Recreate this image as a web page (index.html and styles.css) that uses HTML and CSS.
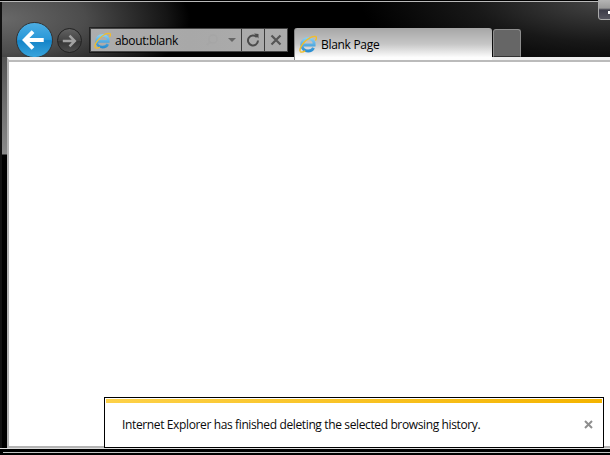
FILE: index.html
```html
<!DOCTYPE html>
<html lang="en">
<head>
<meta charset="utf-8">
<title>Blank Page</title>
<link rel="stylesheet" href="styles.css">
</head>
<body>
<svg class="defs" width="0" height="0" aria-hidden="true">
  <defs>
    <linearGradient id="ieblue" x1="0" y1="0" x2="0" y2="1">
      <stop offset="0" stop-color="#86cdf2"/>
      <stop offset="1" stop-color="#2a8ed2"/>
    </linearGradient>
    <symbol id="ie" viewBox="0 0 18 18">
      <path d="M3.500 10h11.700c.3-3.800-2.400-6.500-6-6.500-3.700 0-6.500 2.800-6.500 6.300s2.800 6.200 6.400 6.200c2.600 0 4.500-1.200 5.500-3.200" fill="none" stroke="url(#ieblue)" stroke-width="2.800"/>
      <path d="M1.300 16.500C-.2 13.800 4.500 5.500 12.300 2.100c2.700-1.100 4.900-.9 5.200.4.200.9-.4 2-1.200 3" fill="none" stroke="#f2bd2a" stroke-width="1.400"/>
      <path d="M1.300 16.500c.8 1 3 .5 5-.6" fill="none" stroke="#f2bd2a" stroke-width="1.400"/>
    </symbol>
  </defs>
</svg>
<div class="window">
  <div class="caption-btn"><span class="caption-glyph"></span></div>
  <header class="chrome">
    <div class="nav-back">
      <svg width="36" height="36" viewBox="0 0 36 36"><path d="M27.500 18H10M16.500 9.500 8 18l8.500 8.500" fill="none" stroke="#fff" stroke-width="4"/></svg>
    </div>
    <div class="nav-forward">
      <svg width="24" height="24" viewBox="0 0 24 24"><path d="M5 12h13M12 6.500l5.500 5.500-5.500 5.500" fill="none" stroke="#a2a2a2" stroke-width="2.600"/></svg>
    </div>
    <div class="address">
      <div class="address-field">
        <svg class="ie-small" width="17" height="17"><use href="#ie"/></svg>
        <span class="address-text">about:blank</span>
        <svg class="search" width="14" height="14" viewBox="0 0 14 14"><circle cx="8" cy="6" r="4" fill="none" stroke="#a4a4a4" stroke-width="1.500"/><path d="M5 9 2 12" stroke="#a4a4a4" stroke-width="2"/></svg>
        <span class="caret"></span>
      </div>
      <div class="address-btn">
        <svg width="14" height="14" viewBox="0 0 14 14"><path d="M10.800 4.200A5 5 0 1 0 12 7.500" fill="none" stroke="#4c4c4c" stroke-width="2"/><path d="M8 .5 12.500 1v4.500z" fill="#4c4c4c"/></svg>
      </div>
      <div class="address-btn">
        <svg width="14" height="14" viewBox="0 0 14 14"><path d="M2.500 2.500l9 9M11.500 2.500l-9 9" stroke="#555" stroke-width="2.200"/></svg>
      </div>
    </div>
    <div class="tab">
      <svg class="ie-small" width="18" height="18"><use href="#ie"/></svg>
      <span class="tab-title">Blank Page</span>
    </div>
    <div class="new-tab"></div>
  </header>
  <div class="frame-row">
    <div class="frame-side"></div>
    <main class="page"><div class="page-rule"></div></main>
  </div>
  <div class="frame-bottom"></div>
  <aside class="notice">
    <div class="notice-bar"></div>
    <div class="notice-body">
      <span class="notice-text">Internet Explorer has finished deleting the selected browsing history.</span>
      <svg width="9" height="9" viewBox="0 0 9 9"><path d="M1 1l7 7M8 1 1 8" stroke="#8e8e8e" stroke-width="2"/></svg>
    </div>
  </aside>
</div>
</body>
</html>
```

FILE: styles.css
```css
* { box-sizing: border-box; }
html, body { margin: 0; padding: 0; }
body { width: 610px; height: 455px; overflow: hidden; background: #000; font-family: "Open Sans", "Noto Sans", sans-serif; }
.defs { position: absolute; }
.window {
  position: relative;
  width: 610px;
  height: 455px;
  display: flex;
  flex-direction: column;
  overflow: hidden;
  background: #000;
}
.caption-btn {
  position: absolute;
  z-index: 2;
  left: 598px;
  top: -2px;
  width: 20px;
  height: 22px;
  border: 1px solid #aaa;
  border-radius: 0 0 3px 3px;
  background: linear-gradient(#b8b8b8, #9a9a9a 45%, #3c3c48 55%, #55555f);
}
.caption-glyph { position: absolute; left: 9px; top: 12px; width: 4px; height: 3px; background: #fff; }
.chrome {
  height: 57px;
  flex: none;
  display: flex;
  align-items: flex-start;
  padding: 27px 0 0 16px;
  border-top: 1px solid #000;
  background:
    radial-gradient(ellipse 250px 75px at 100% 0, #474747, rgba(40,40,40,.6) 55%, rgba(0,0,0,0) 100%),
    radial-gradient(ellipse 190px 75px at 0 18px, #696969, #4c4c4c 45%, #151515 88%, #000 100%),
    #000;
  box-shadow: inset 0 1px 0 #b9b9b9, inset 2px 0 0 #111;
}
.nav-back {
  width: 37px;
  height: 36px;
  margin-top: -6px;
  border-radius: 18.5px 18.5px 18px 18px;
  background: linear-gradient(#4cade2, #2a98d8 48%, #1484c8 52%, #38a4dc);
  border: 1px solid #333;
  display: flex;
  align-items: center;
  justify-content: center;
  flex: none;
}
.nav-forward {
  width: 25px;
  height: 25px;
  margin: 0 0 0 4px;
  border-radius: 50%;
  background: linear-gradient(#626262, #444 50%, #363636 52%, #4e4e4e);
  border: 1px solid #222;
  display: flex;
  align-items: center;
  justify-content: center;
  flex: none;
}
.address {
  margin-left: 8px;
  width: 198px;
  height: 24px;
  display: flex;
  flex: none;
  border: 1px solid #444;
  background: linear-gradient(90deg, #adadad, #a8a8a8 50%, #acacac);
  box-shadow: 0 0 0 1px rgba(0,0,0,.5);
}
.address-field {
  flex: 1;
  display: flex;
  align-items: center;
  padding-left: 3px;
  font-size: 12px;
  letter-spacing: -0.35px;
  color: #000;
  border-right: 1px solid #3c3c3c;
}
.ie-small { flex: none; }
.address-text { margin-left: 4px; flex: 1; }
.search { margin-right: 9px; opacity: .5; }
.caret { width: 0; height: 0; border: 4px solid transparent; border-top-color: #666; border-bottom: 0; margin-right: 5px; }
.address-btn {
  width: 23px;
  display: flex;
  align-items: center;
  justify-content: center;
  border-right: 1px solid #3c3c3c;
}
.address-btn:last-child { border-right: 0; width: 22px; }
.tab {
  position: relative;
  z-index: 1;
  margin-left: 6px;
  width: 198px;
  height: 32px;
  border-radius: 3px 3px 0 0;
  border-left: 1px solid #888;
  background: linear-gradient(#a6a6a6, #c6c6c6 50%, #fdfdfd 92%);
  display: flex;
  align-items: center;
  padding: 0 0 0 4px;
  font-size: 12px;
  color: #000;
  flex: none;
  gap: 4px;
}
.tab-title { letter-spacing: -0.3px; }
.new-tab {
  margin: 1px 0 0 1px;
  width: 28px;
  height: 28px;
  background: #666;
  border: 1px solid #8e8e8e;
  border-bottom-color: #333;
  border-radius: 3px 3px 0 0;
  flex: none;
}
.frame-row { height: 391px; flex: none; display: flex; }
.frame-side {
  width: 7px;
  flex: none;
  background: linear-gradient(#555 0, #8a8a8a 97px, #000 98px);
  border-left: 2px solid #111;
}
.page {
  flex: 1;
  background: #fff;
  border-left: 2px solid #b4b4b4;
  border-top: 3px solid #efefef;
  border-bottom: 2px solid #b4b4b4;
}
.page-rule { height: 2px; background: #bbb; }
.frame-bottom {
  flex: 1;
  background: #000;
  border-top: 1px solid #dedede;
  display: flex;
}
.frame-bottom::after { content: ""; margin: 3px 0 0 3px; height: 1px; flex: 1; background: #c4c4c4; }
.notice {
  position: absolute;
  left: 104px;
  top: 397px;
  width: 500px;
  height: 51px;
  background: #fff;
  border: 1px solid #000;
  padding: 1px;
  display: flex;
  flex-direction: column;
}
.notice-bar { height: 4px; flex: none; background: linear-gradient(90deg, #fdd148, #f4b400); }
.notice-body {
  flex: 1;
  display: flex;
  align-items: center;
  justify-content: space-between;
  padding: 0 9px 0 16px;
  font-size: 12px;
  color: #0a0a0a;
}
.notice-text { letter-spacing: -0.37px; }
```
